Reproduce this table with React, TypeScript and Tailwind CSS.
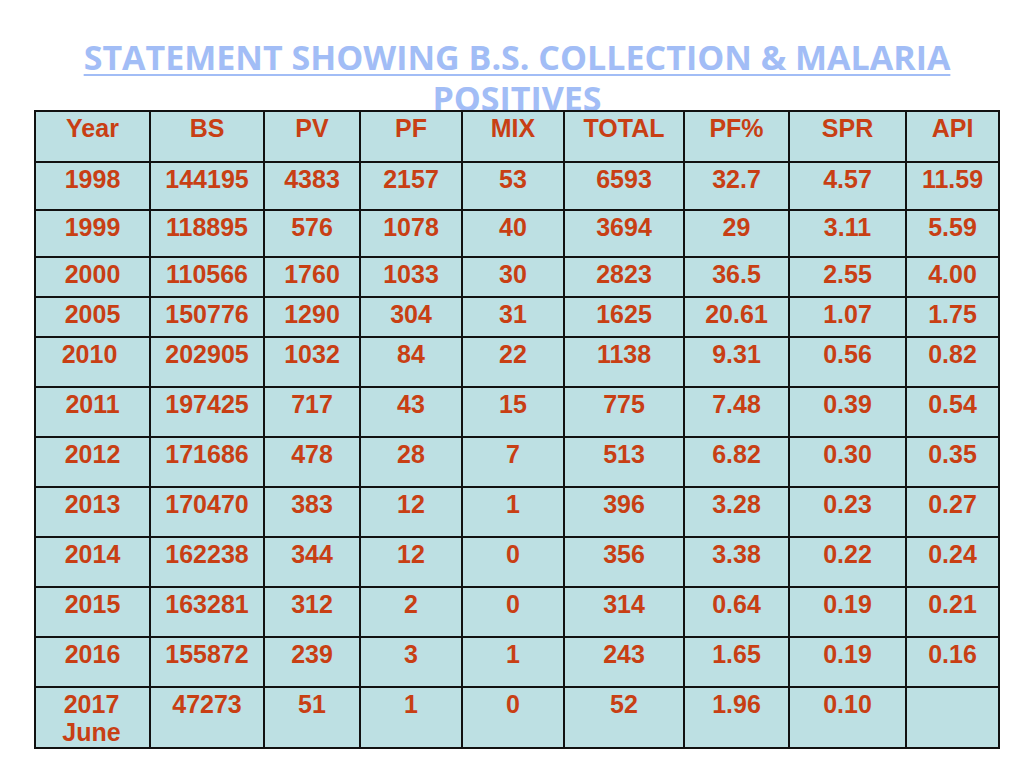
import * as React from "react";

const cols = [115, 114, 96, 102, 102, 120, 105, 117, 93];

const header = ["Year", "BS", "PV", "PF", "MIX", "TOTAL", "PF%", "SPR", "API"];

const rows: { h: number; cells: string[] }[] = [
  { h: 48, cells: ["1998", "144195", "4383", "2157", "53", "6593", "32.7", "4.57", "11.59"] },
  { h: 47, cells: ["1999", "118895", "576", "1078", "40", "3694", "29", "3.11", "5.59"] },
  { h: 40, cells: ["2000", "110566", "1760", "1033", "30", "2823", "36.5", "2.55", "4.00"] },
  { h: 40, cells: ["2005", "150776", "1290", "304", "31", "1625", "20.61", "1.07", "1.75"] },
  { h: 50, cells: ["2010", "202905", "1032", "84", "22", "1138", "9.31", "0.56", "0.82"] },
  { h: 50, cells: ["2011", "197425", "717", "43", "15", "775", "7.48", "0.39", "0.54"] },
  { h: 50, cells: ["2012", "171686", "478", "28", "7", "513", "6.82", "0.30", "0.35"] },
  { h: 50, cells: ["2013", "170470", "383", "12", "1", "396", "3.28", "0.23", "0.27"] },
  { h: 50, cells: ["2014", "162238", "344", "12", "0", "356", "3.38", "0.22", "0.24"] },
  { h: 50, cells: ["2015", "163281", "312", "2", "0", "314", "0.64", "0.19", "0.21"] },
  { h: 50, cells: ["2016", "155872", "239", "3", "1", "243", "1.65", "0.19", "0.16"] },
];

const cell =
  "border-2 border-[#111] bg-[#bde0e3] text-center align-top pt-[2px] px-0 text-[25px] leading-[28px] font-bold text-[#c83f14]";

export default function App() {
  return (
    <div className="w-[1024px] h-[768px] bg-white overflow-hidden">
      {/* Title, second line runs under the table */}
      <div className="h-[110px] pt-[37px] pl-[46px] pr-[36px]">
        <h1 className="text-center text-[34px] leading-[41px] font-bold text-[#a2bdf6] underline decoration-[2px] underline-offset-[4px] [font-family:'Open_Sans',sans-serif]">
          STATEMENT SHOWING B.S. COLLECTION &amp; MALARIA POSITIVES
        </h1>
      </div>

      {/* Table */}
      <div className="relative z-10 pl-[34px]">
        <table className="border-collapse table-fixed w-[964px] [font-family:'Liberation_Sans',Arial,sans-serif]">
          <colgroup>
            {cols.map((w, i) => (
              <col key={i} style={{ width: w }} />
            ))}
          </colgroup>
          <tbody>
            <tr className="h-[51px]">
              {header.map((t) => (
                <td key={t} className={cell}>
                  {t}
                </td>
              ))}
            </tr>
            {rows.map((r) => (
              <tr key={r.cells[0]} style={{ height: r.h }}>
                {r.cells.map((c, i) => (
                  <td key={i} className={cell + (r.cells[0] === "2010" && i === 0 ? " pr-[6px]" : "")}>
                    {c}
                  </td>
                ))}
              </tr>
            ))}
            <tr className="h-[61px]">
              <td className={cell + " pt-0 pr-[2px]"}>
                2017
                <br />
                June
              </td>
              {["47273", "51", "1", "0", "52", "1.96", "0.10", ""].map((c, i) => (
                <td key={i} className={cell + " pt-0"}>
                  {c}
                </td>
              ))}
            </tr>
          </tbody>
        </table>
      </div>
    </div>
  );
}
